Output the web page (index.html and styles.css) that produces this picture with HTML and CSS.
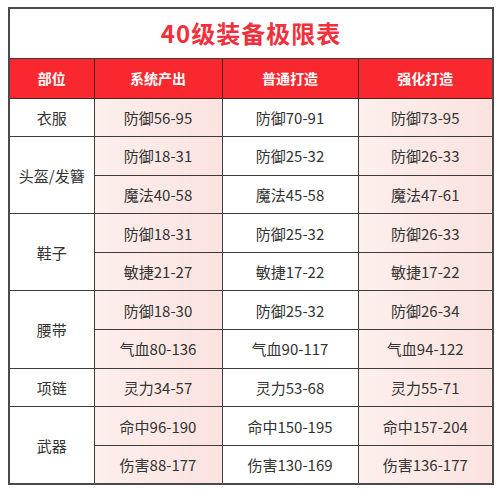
FILE: index.html
```html
<!DOCTYPE html>
<html lang="zh-CN">
<head>
<meta charset="utf-8">
<title>40级装备极限表</title>
<link rel="stylesheet" href="styles.css">
</head>
<body>
<table class="gear">
  <colgroup>
    <col class="c1"><col class="c2"><col class="c3"><col class="c4">
  </colgroup>
  <thead>
    <tr class="title-row"><th colspan="4" class="title">40级装备极限表</th></tr>
    <tr class="head-row"><th>部位</th><th>系统产出</th><th>普通打造</th><th>强化打造</th></tr>
  </thead>
  <tbody>
    <tr><td class="part">衣服</td><td class="pink">防御56-95</td><td>防御70-91</td><td class="pink">防御73-95</td></tr>
    <tr><td class="part" rowspan="2">头盔/发簪</td><td class="pink">防御18-31</td><td>防御25-32</td><td class="pink">防御26-33</td></tr>
    <tr><td class="pink">魔法40-58</td><td>魔法45-58</td><td class="pink">魔法47-61</td></tr>
    <tr><td class="part" rowspan="2">鞋子</td><td class="pink">防御18-31</td><td>防御25-32</td><td class="pink">防御26-33</td></tr>
    <tr><td class="pink">敏捷21-27</td><td>敏捷17-22</td><td class="pink">敏捷17-22</td></tr>
    <tr><td class="part" rowspan="2">腰带</td><td class="pink">防御18-30</td><td>防御25-32</td><td class="pink">防御26-34</td></tr>
    <tr><td class="pink">气血80-136</td><td>气血90-117</td><td class="pink">气血94-122</td></tr>
    <tr><td class="part">项链</td><td class="pink">灵力34-57</td><td>灵力53-68</td><td class="pink">灵力55-71</td></tr>
    <tr><td class="part" rowspan="2">武器</td><td class="pink">命中96-190</td><td>命中150-195</td><td class="pink">命中157-204</td></tr>
    <tr><td class="pink">伤害88-177</td><td>伤害130-169</td><td class="pink">伤害136-177</td></tr>
  </tbody>
</table>
</body>
</html>
```
FILE: styles.css
```css
html, body {
  margin: 0;
  padding: 0;
  background: #ffffff;
}
body {
  padding: 7px 8px 0 8px;
  font-family: "Noto Sans CJK SC", "Noto Sans", sans-serif;
}
.gear {
  border-collapse: collapse;
  width: 484px;
  table-layout: fixed;
  border: 2px solid #4a4a4a;
}
.c1 { width: 85px; }
.c2 { width: 128px; }
.c3 { width: 136px; }
.c4 { width: 135px; }
.gear th, .gear td {
  border: 1px solid #3c3c3c;
  text-align: center;
  vertical-align: middle;
  padding: 0;
}
.title-row { height: 50px; }
.title {
  background: #ffffff;
  color: #f0303c;
  font-size: 24px;
  font-weight: 700;
  letter-spacing: 1px;
  line-height: 1;
}
.head-row { height: 40px; }
.head-row th {
  background: #f9282f;
  color: #ffffff;
  font-size: 14px;
  font-weight: 700;
  border-color: #4a2222;
}
.gear tbody tr { height: 38.6px; }
.gear td {
  font-size: 15px;
  color: #333333;
  background: #ffffff;
  line-height: 1;
}
.gear td.pink {
  background: linear-gradient(to right, #fcefec, #fbe2df);
}
```
